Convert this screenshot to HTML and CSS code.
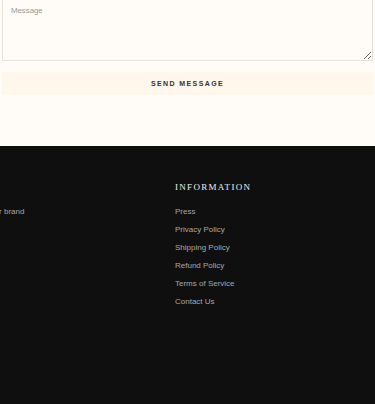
FILE: index.html
```html
<!DOCTYPE html>
<html>
<head>
  <title>Contact</title>
  <link rel="stylesheet" href="styles.css">
</head>
<body>
  <section class="contact">
    <textarea class="message" placeholder="Message"></textarea>
    <button class="send-btn">Send message</button>
  </section>

  <footer class="footer">
    <div class="footer-row">
      <div class="footer-col about">
        <h4 class="footer-title">About</h4>
        <p class="footer-text">Tell us about your brand</p>
      </div>
      <div class="footer-col">
        <h4 class="footer-title">Information</h4>
        <ul class="footer-links">
          <li><a href="#">Press</a></li>
          <li><a href="#">Privacy Policy</a></li>
          <li><a href="#">Shipping Policy</a></li>
          <li><a href="#">Refund Policy</a></li>
          <li><a href="#">Terms of Service</a></li>
          <li><a href="#">Contact Us</a></li>
        </ul>
      </div>
    </div>
  </footer>
</body>
</html>
```

FILE: styles.css
```css
:root {
  --bg-color: #fffcf7;
  --button-bg: #fff6ec;
  --border-color: #e6e2dc;
  --text-color: #333333;
  --footer-bg: #0f0f0f;
  --footer-text: #a8a8a8;
  --footer-title: #f0f0f0;
}

html, body {
  height: 100%;
}

body {
  margin: 0;
  display: flex;
  flex-direction: column;
  overflow: hidden;
  font-family: "Liberation Sans", Arial, sans-serif;
  background: var(--bg-color);
  color: var(--text-color);
}

.contact {
  padding: 0 2px 51px;
}

.message {
  display: block;
  box-sizing: border-box;
  width: 100%;
  height: 62px;
  margin-top: -1px;
  padding: 6px 8px;
  border: 1px solid var(--border-color);
  background: transparent;
  font-family: inherit;
  font-size: 7.8px;
  resize: vertical;
}

.message::placeholder {
  color: #9a9894;
}

.send-btn {
  display: block;
  width: 100%;
  height: 23px;
  margin-top: 11px;
  border: none;
  background: var(--button-bg);
  color: var(--text-color);
  font-family: inherit;
  font-size: 7px;
  font-weight: bold;
  letter-spacing: 1.4px;
  text-transform: uppercase;
}

.footer {
  flex: 1;
  background: var(--footer-bg);
  padding-top: 36px;
}

.footer-row {
  display: flex;
  margin-left: -61px;
}

.footer-col.about {
  width: 236px;
}

.footer-title {
  margin: 0 0 11px;
  font-family: "Liberation Serif", "Times New Roman", serif;
  font-weight: normal;
  font-size: 9px;
  line-height: 10px;
  letter-spacing: 1.3px;
  text-transform: uppercase;
  color: var(--footer-title);
}

.about .footer-title {
  visibility: hidden;
}

.footer-text {
  margin: 0;
  font-size: 8px;
  line-height: 18px;
  white-space: nowrap;
  color: var(--footer-text);
}

.footer-links {
  margin: 0;
  padding: 0;
  list-style: none;
}

.footer-links li {
  font-size: 8px;
  line-height: 18px;
}

.footer-links a {
  color: var(--footer-text);
  text-decoration: none;
}
```
